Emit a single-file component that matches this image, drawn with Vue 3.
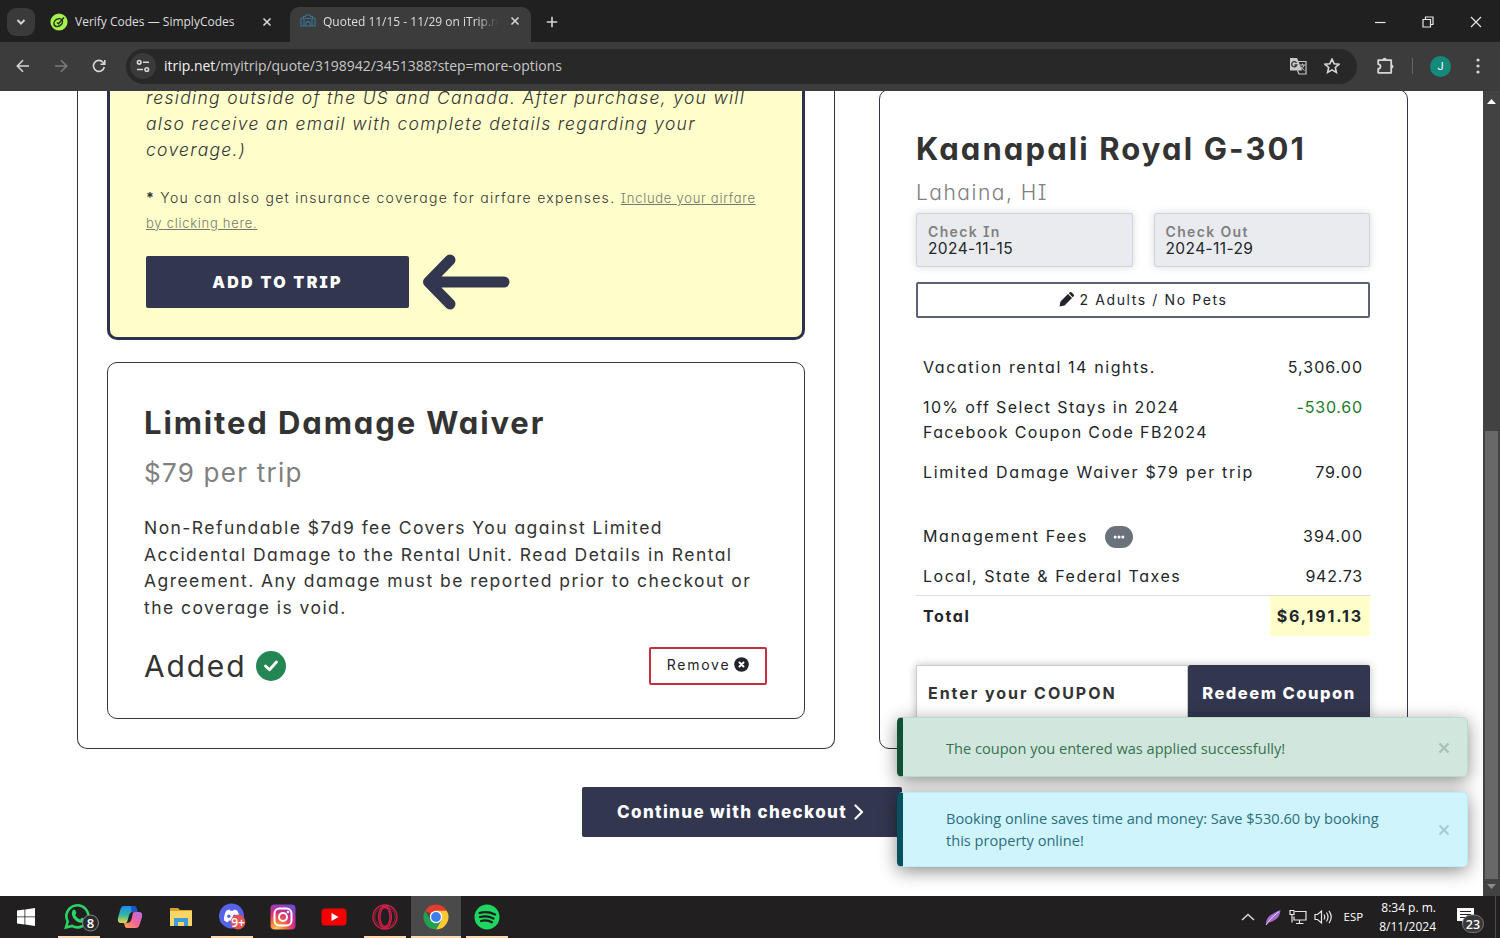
<template>
    <div class="desktop">
        <!-- Tab strip -->
        <div class="tab-strip">
            <div class="tab-search">
                <svg width="10" height="10" viewBox="0 0 10 10"><path d="M1.5 3l3.5 3.6L8.500 3" class="line bold" /></svg>
            </div>
            <div class="tab first">
                <svg class="favicon" width="18" height="18" viewBox="0 0 18 18">
                    <circle cx="9" cy="9" r="8.600" fill="#a6f04f" />
                    <ellipse cx="8.200" cy="9.600" rx="4.600" ry="3.500" transform="rotate(-35 8.200 9.600)" fill="none" stroke="#1d3312" stroke-width="1.500" />
                    <path d="M7 9.500l1.500 1.200 5.500-6.200" fill="none" stroke="#1d3312" stroke-width="1.500" />
                </svg>
                <span class="tab-title t1">Verify Codes — SimplyCodes</span>
                <svg class="tab-close" width="10" height="10" viewBox="0 0 10 10"><path d="M1.500 1.500l7 7M8.500 1.500l-7 7" class="line" /></svg>
            </div>
            <div class="tab active">
                <svg class="favicon" width="16" height="14" viewBox="0 0 16 14">
                    <path d="M1 12V4.500L3.500 4V2.500h2L6 1h4l.5 1.500h2V4l2.500.5V12zM4 12V4M12 12V4M6 12V8.500Q8 6.500 10 8.500V12M5 4.500h6" fill="none" stroke="#3a7292" stroke-width="1.200" />
                </svg>
                <span class="tab-title t2">Quoted 11/15 - 11/29 on iTrip.n</span>
                <svg class="tab-close" width="10" height="10" viewBox="0 0 10 10"><path d="M1.500 1.500l7 7M8.500 1.500l-7 7" class="line" /></svg>
            </div>
            <svg class="new-tab" width="12" height="12" viewBox="0 0 12 12"><path d="M6 .8v10.400M.8 6h10.400" class="line" /></svg>
            <div class="window-buttons">
                <svg width="12" height="12" viewBox="0 0 12 12"><path d="M1 6.500h10.500" class="line thin" /></svg>
                <svg width="12" height="12" viewBox="0 0 12 12"><path d="M1 3.500h7.500V11H1zM3.500 3.500V1H11v7.500H8.500" class="line thin" /></svg>
                <svg width="12" height="12" viewBox="0 0 12 12"><path d="M1 1l10 10M11 1L1 11" class="line thin" /></svg>
            </div>
        </div>

        <!-- Toolbar -->
        <div class="toolbar">
            <svg class="nav-icon" width="14" height="14" viewBox="0 0 14 14"><path d="M13 7H1.500M7 1.200L1.300 7 7 12.800" class="line" /></svg>
            <svg class="nav-icon dim" width="14" height="14" viewBox="0 0 14 14"><path d="M1 7h11.500M7 1.200L12.700 7 7 12.800" class="line" /></svg>
            <svg class="nav-icon" width="14" height="14" viewBox="0 0 14 14"><path d="M12.300 8A5.500 5.500 0 1 1 11 3.200L12.500 5M12.800 1v4.300H8.500" class="line" /></svg>
            <div class="omnibox">
                <div class="site-info">
                    <svg width="14" height="14" viewBox="0 0 14 14"><circle cx="3.200" cy="3.300" r="1.800" class="line" /><circle cx="10.800" cy="10.500" r="1.800" class="line" /><path d="M7 3.300h6M1 10.500h6" class="line" /></svg>
                </div>
                <span class="url"><b>itrip.net</b>/myitrip/quote/3198942/3451388?step=more-options</span>
                <svg class="translate" width="18" height="18" viewBox="0 0 18 18">
                    <path d="M1 1h7l1.500 3.500L13 13.500H1z" fill="#c8c8c8" />
                    <path d="M9 4.500h8V17h-7l-1.500-3.500" fill="none" stroke="#c8c8c8" stroke-width="1.200" />
                    <path d="M7.500 5.800A2.600 2.600 0 1 0 7.800 8H5.500" fill="none" stroke="#333" stroke-width="1.300" />
                    <path d="M11 8h5M13.500 6.500V8M15 8q-1 3-3 4.500M12 9.500q1 2.500 3.500 4" fill="none" stroke="#c8c8c8" stroke-width="1" />
                </svg>
                <svg width="16" height="16" viewBox="0 0 16 16"><path d="M8 1.200l2.100 4.500 4.900.5-3.700 3.300 1.100 4.900L8 11.900l-4.400 2.500 1.100-4.900L1 6.200l4.900-.5z" class="line" /></svg>
            </div>
            <svg class="puzzle" width="18" height="18" viewBox="0 0 18 18"><path d="M2.200 3.200h13v12.600h-13V12q2.300-.4 2.300-2.400T2.200 7.200z" class="line wide" stroke-linejoin="round" /><path d="M6.500 3Q6.500.8 8.600.8T10.700 3zM15.300 7.500q2.200 0 2.200 2t-2.200 2z" fill="#d6d6d6" /></svg>
            <span class="divider"></span>
            <span class="avatar">J</span>
            <svg class="menu" width="4" height="16" viewBox="0 0 4 16"><circle cx="2" cy="2" r="1.600" /><circle cx="2" cy="8" r="1.600" /><circle cx="2" cy="14" r="1.600" /></svg>
        </div>

        <!-- Page -->
        <div class="page">
            <div class="content">
                <main class="main-column">
                    <div class="options-panel">
                        <section class="insurance-card">
                            <p class="terms">
                                <span>residing outside of the US and Canada. After purchase, you will</span>
                                <span>also receive an email with complete details regarding your</span>
                                <span>coverage.)</span>
                            </p>
                            <p class="note"><b>*</b> You can also get insurance coverage for airfare expenses. <a>Include your airfare<br>by clicking here.</a></p>
                            <div class="add-row">
                                <button class="btn add-btn">ADD TO TRIP</button>
                                <svg width="88" height="56" viewBox="0 0 88 56"><path d="M82 28H7M28 6L6.500 28 28 50" fill="none" stroke="#32364f" stroke-width="11" stroke-linecap="round" stroke-linejoin="round" /></svg>
                            </div>
                        </section>
                        <section class="waiver-card">
                            <h2 class="waiver-title">Limited Damage Waiver</h2>
                            <p class="waiver-price">$79 per trip</p>
                            <p class="waiver-text">
                                <span v-for="line in waiverLines" :key="line">{{ line }}</span>
                            </p>
                            <div class="added-row">
                                <span class="added">Added</span>
                                <svg width="30" height="30" viewBox="0 0 30 30"><circle cx="15" cy="15" r="15" fill="#258655" /><path d="M9.500 15l4 3.800 7-7.800" fill="none" stroke="#fff" stroke-width="2.800" stroke-linecap="round" stroke-linejoin="round" /></svg>
                                <button class="remove-btn">
                                    <span>Remove</span>
                                    <svg width="15" height="15" viewBox="0 0 15 15"><circle cx="7.500" cy="7.500" r="7.300" fill="#212529" /><path d="M5.500 5.500l4 4M9.500 5.500l-4 4" stroke="#fff" stroke-width="2" stroke-linecap="round" /></svg>
                                </button>
                            </div>
                        </section>
                    </div>
                    <button class="btn checkout-btn">
                        <span>Continue with checkout</span>
                        <svg width="10" height="16" viewBox="0 0 10 16"><path d="M1.500 1.500L8 8l-6.500 6.500" fill="none" stroke="#fff" stroke-width="2.200" stroke-linecap="round" stroke-linejoin="round" /></svg>
                    </button>
                </main>

                <aside class="summary-panel">
                    <h2 class="property">Kaanapali Royal G-301</h2>
                    <p class="place">Lahaina, HI</p>
                    <div class="dates">
                        <div class="date-box"><label>Check In</label><span>2024-11-15</span></div>
                        <div class="date-box"><label>Check Out</label><span>2024-11-29</span></div>
                    </div>
                    <div class="guests">
                        <svg width="15" height="15" viewBox="0 0 15 15"><path d="M1.500 9.500L9 2l4 4-7.500 7.500L.5 14.500zM9.800 1.300l1-1q.8-.6 1.600 0l2.300 2.300q.6.800 0 1.600l-1 1z" fill="#212529" /></svg>
                        <span>2 Adults / No Pets</span>
                    </div>
                    <div class="charges">
                        <div v-for="c in charges" :key="c.id" class="charge" :class="c.id">
                            <div class="charge-label">
                                <span v-for="l in c.lines" :key="l">{{ l }}</span>
                                <svg v-if="c.more" width="28" height="22" viewBox="0 0 28 22"><rect width="28" height="22" rx="11" fill="#6a737b" /><circle cx="10.200" cy="11" r="1.500" fill="#fff" /><circle cx="14" cy="11" r="1.500" fill="#fff" /><circle cx="17.800" cy="11" r="1.500" fill="#fff" /></svg>
                            </div>
                            <div class="amount">{{ c.amount }}</div>
                        </div>
                    </div>
                    <div class="coupon">
                        <div class="coupon-input">Enter your COUPON</div>
                        <button class="btn redeem-btn">Redeem Coupon</button>
                    </div>
                </aside>
            </div>

            <div class="toasts">
                <div class="toast success">
                    <p><span>The coupon you entered was applied successfully!</span></p>
                    <svg width="12" height="12" viewBox="0 0 12 12"><path d="M1.500 1.500l9 9M10.500 1.500l-9 9" /></svg>
                </div>
                <div class="toast info">
                    <p><span>Booking online saves time and money: Save $530.60 by booking</span><span>this property online!</span></p>
                    <svg width="12" height="12" viewBox="0 0 12 12"><path d="M1.500 1.500l9 9M10.500 1.500l-9 9" /></svg>
                </div>
            </div>

            <div class="scrollbar">
                <svg width="9" height="6" viewBox="0 0 9 6"><path d="M0 6l4.500-5L9 6z" fill="#fff" /></svg>
                <div class="thumb"></div>
                <svg width="9" height="6" viewBox="0 0 9 6"><path d="M0 0l4.500 5L9 0z" fill="#8a8a8a" /></svg>
            </div>
        </div>

        <!-- Windows taskbar -->
        <div class="taskbar">
            <div class="task">
                <svg width="18" height="18" viewBox="0 0 18 18" fill="#fff"><path d="M0 2.500l7.500-1v7H0zM8.300 1.400L18 0v8.500H8.300zM0 9.300h7.500v7.200L0 15.500zM8.300 9.300H18V18l-9.700-1.400z" /></svg>
            </div>
            <div class="task open whatsapp">
                <svg width="36" height="30" viewBox="0 0 36 30">
                    <path d="M3 25.500l1.700-6A11 11 0 1 1 9 23.900z" fill="none" stroke="#2bd366" stroke-width="2.600" />
                    <path d="M9.500 8.500q1.500-2 2.800-.2l1 2.700q0 .8-1.200 2 1.800 3.200 5 4.500l1.600-1.800q.6-.3 3.300 1.300 0 3.500-3.500 3.800-4.500 0-8-4.500-2.800-4-1-7.800z" fill="#2bd366" />
                    <circle cx="27.500" cy="21" r="8" fill="#2b2a2c" stroke="#84888a" />
                    <text x="27.500" y="25.500" text-anchor="middle" class="count">8</text>
                </svg>
            </div>
            <div class="task">
                <svg width="26" height="24" viewBox="0 0 26 24">
                    <defs>
                        <linearGradient id="cop-a" x1="0" y1="0" x2="0" y2="1"><stop offset="0" stop-color="#1b8af0" /><stop offset=".55" stop-color="#35b9a0" /><stop offset="1" stop-color="#f4d443" /></linearGradient>
                        <linearGradient id="cop-b" x1="1" y1="0" x2="0" y2="1"><stop offset="0" stop-color="#b56cf0" /><stop offset=".5" stop-color="#f0649a" /><stop offset="1" stop-color="#ffa54a" /></linearGradient>
                    </defs>
                    <path d="M7 1h10q2 0 3 4l.5 2h-5q-2 0-3 4l-1.500 5q-1 2-3 2H4q-4 0-3-5L3.500 4Q4.500 1 7 1z" fill="url(#cop-a)" />
                    <path d="M14 1h3q2 0 3 4l.5 2h-6z" fill="#2450c8" />
                    <path d="M19 7h3q4 0 3 5l-2.500 8q-1 3-3.500 3h-9q-2 0-2.500-3l-.5-2h3q2 0 3-4l1.500-5q.7-2 4-2z" fill="url(#cop-b)" />
                    <path d="M16 7.500h-2q-1.500.5-2.300 4L10 17.500h2.300q1.500-.5 2.400-4z" fill="#211f20" />
                </svg>
            </div>
            <div class="task">
                <svg width="24" height="20" viewBox="0 0 24 20"><path d="M1 1h8l2 2h12v5H1z" fill="#d9a22c" /><path d="M1 4h22v15H1z" fill="#fbd667" /><path d="M5 19v-8h14v8h-4v-4H9v4z" fill="#3d9bd8" /></svg>
            </div>
            <div class="task open">
                <svg width="28" height="28" viewBox="0 0 28 28">
                    <circle cx="13.500" cy="13" r="12.500" fill="#5663e8" />
                    <path d="M8.500 7.500l3-1 .8 1.200h3l.8-1.200 3 1q3 4.500 2.600 10l-3.500 2-1.300-2h-6l-1.300 2-3.500-2q-.5-5.500 2.400-10z" fill="#fff" />
                    <circle cx="10.800" cy="13.300" r="1.700" fill="#5663e8" /><circle cx="16.600" cy="13.300" r="1.700" fill="#5663e8" />
                    <circle cx="20" cy="19" r="7.400" fill="#e25354" />
                    <text x="20" y="23.500" text-anchor="middle" class="badge">9+</text>
                </svg>
            </div>
            <div class="task">
                <svg width="26" height="26" viewBox="0 0 26 26">
                    <defs>
                        <radialGradient id="ig" cx=".25" cy="1" r="1.150"><stop offset="0" stop-color="#fdd35a" /><stop offset=".3" stop-color="#f9713c" /><stop offset=".6" stop-color="#d62c86" /><stop offset="1" stop-color="#6a4bd6" /></radialGradient>
                    </defs>
                    <rect x=".5" y=".5" width="25" height="25" rx="4" fill="url(#ig)" />
                    <rect x="4.500" y="4.500" width="17" height="17" rx="5" fill="none" stroke="#fff" stroke-width="2" />
                    <circle cx="13" cy="13" r="4" fill="none" stroke="#fff" stroke-width="2" /><circle cx="18" cy="8" r="1.200" fill="#fff" />
                </svg>
            </div>
            <div class="task">
                <svg width="26" height="18" viewBox="0 0 26 18"><rect x=".5" y=".5" width="25" height="17" rx="3.500" fill="#f40000" /><path d="M10.500 5l7 4-7 4z" fill="#fff" /></svg>
            </div>
            <div class="task open">
                <svg width="26" height="26" viewBox="0 0 26 26" fill="none" stroke="#cf1f4a" stroke-width="1.300"><circle cx="13" cy="13" r="12" /><circle cx="13" cy="13" r="10.300" stroke-width=".7" /><ellipse cx="13" cy="13" rx="6.500" ry="11" /><ellipse cx="13" cy="13" rx="5" ry="9.500" /></svg>
            </div>
            <div class="task current">
                <svg width="26" height="26" viewBox="0 0 26 26">
                    <path d="M13 13L2.200 6.800A12.400 12.400 0 0 1 23.800 6.800z" fill="#e33b2e" />
                    <path d="M13 13V6.800h10.800A12.400 12.400 0 0 1 13 25.400L18.400 16z" fill="#fcc934" />
                    <path d="M2.200 6.800L7.600 16 13 18.500l5-2L13 25.400A12.400 12.400 0 0 1 2.200 6.800z" fill="#23a050" />
                    <circle cx="13" cy="13" r="6.200" fill="#fff" /><circle cx="13" cy="13" r="4.900" fill="#3c7df0" />
                </svg>
            </div>
            <div class="task open">
                <svg width="26" height="26" viewBox="0 0 26 26"><circle cx="13" cy="13" r="12.500" fill="#1ed760" /><path d="M5.500 9q8-2.300 15.500 1.500M6 13q7-2 13.500 1.500M7 17q6-1.500 11 1.300" fill="none" stroke="#1d1d1d" stroke-width="2.200" stroke-linecap="round" /></svg>
            </div>

            <div class="tray">
                <svg width="14" height="8" viewBox="0 0 14 8"><path d="M1 7l6-5.500L13 7" class="line" /></svg>
                <svg class="feather" width="16" height="17" viewBox="0 0 16 17"><path d="M1 16Q.5 10 5 6.500T15.500 1Q15 7.500 10.500 10.500T3 13.500z" fill="#a66dd0" /><path d="M1 16Q5 9 14 2.500" stroke="#e6cdf5" stroke-width="1" fill="none" /></svg>
                <svg class="network" width="18" height="16" viewBox="0 0 18 16"><path d="M6 2.500h11v8.500H5V7.500M10.500 11v3.500M7 14.500h7.500M1 1.500h4v4H1zM3 5.500v8" class="line thin" /></svg>
                <svg class="volume" width="19" height="16" viewBox="0 0 19 16"><path d="M1 5.500h2.500L7.500 2v12l-4-3.500H1zM10 5.500q1.500 2.500 0 5M12.500 3.500q3 4.500 0 9M15 1.800q4.500 6.200 0 12.400" class="line thin" /></svg>
                <span class="lang">ESP</span>
                <div class="clock"><span>8:34 p. m.</span><span>8/11/2024</span></div>
                <svg class="action-center" width="30" height="28" viewBox="0 0 30 28">
                    <path d="M2 2h17v13H11l-4 4v-4H2z" fill="#fff" /><path d="M5 5.500h11M5 8.500h11M5 11.500h7" stroke="#222" stroke-width="1.200" />
                    <rect x="7.500" y="9" width="21" height="17.500" rx="8.700" fill="#38373a" stroke="#777" />
                    <text x="18" y="22.500" text-anchor="middle" class="notif">23</text>
                </svg>
                <span class="show-desktop"></span>
            </div>
        </div>
    </div>
</template>

<script setup>
const waiverLines = [
    'Non-Refundable $7d9 fee Covers You against Limited',
    'Accidental Damage to the Rental Unit. Read Details in Rental',
    'Agreement. Any damage must be reported prior to checkout or',
    'the coverage is void.'
]

const charges = [
    { id: 'rental', lines: ['Vacation rental 14 nights.'], amount: '5,306.00' },
    { id: 'discount', lines: ['10% off Select Stays in 2024', 'Facebook Coupon Code FB2024'], amount: '-530.60' },
    { id: 'waiver', lines: ['Limited Damage Waiver $79 per trip'], amount: '79.00' },
    { id: 'fees', lines: ['Management Fees'], amount: '394.00', more: true },
    { id: 'taxes', lines: ['Local, State & Federal Taxes'], amount: '942.73' },
    { id: 'total', lines: ['Total'], amount: '$6,191.13' }
]
</script>

<style>
body {
    background: #fff;
    overflow: hidden;
}
</style>

<style scoped>
.desktop {
    width: 1500px;
    height: 938px;
    display: flex;
    flex-direction: column;
    overflow: hidden;
    font-family: "Open Sans", sans-serif;
    white-space: nowrap;
}

.desktop * {
    box-sizing: border-box;
}

p, h2 {
    margin: 0;
}

svg {
    display: block;
    flex: none;
}

button {
    font-family: inherit;
    border: 0;
    padding: 0;
}

.line {
    fill: none;
    stroke: #d6d6d6;
    stroke-width: 1.6;
}

.line.bold {
    stroke-width: 2;
}

.line.wide {
    stroke-width: 1.8;
}

.line.thin {
    stroke: #e8e8e8;
    stroke-width: 1.2;
}

/* Tab strip */
.tab-strip {
    height: 42px;
    flex: none;
    background: #202020;
    display: flex;
    align-items: center;
    padding: 1px 18px 0 7px;
    color: #dedede;
}

.tab-search {
    width: 28px;
    height: 28px;
    border-radius: 9px;
    background: #3a3a3a;
    display: flex;
    align-items: center;
    justify-content: center;
}

.tab {
    display: flex;
    align-items: center;
    height: 36px;
}

.tab.first {
    width: 255px;
    padding-left: 15px;
}

.tab-title {
    font-size: 12px;
    margin-left: 7px;
    overflow: hidden;
}

.t1 {
    width: 178px;
}

.t2 {
    width: 175px;
    margin-left: 7px;
    mask-image: linear-gradient(90deg, #000 88%, transparent);
}

.tab-close {
    margin-left: 8px;
}

.tab.first .tab-close {
    margin-left: auto;
    margin-right: 18px;
}

.tab.active {
    width: 241px;
    height: 35px;
    align-self: flex-end;
    border-radius: 9px 9px 0 0;
    background: #3c3c3c;
    padding-left: 10px;
    padding-bottom: 7px;
}

.tab.active .tab-close {
    margin-left: 12px;
}

.new-tab {
    margin-left: 15px;
}

.window-buttons {
    margin-left: auto;
    display: flex;
    gap: 36px;
}

/* Toolbar */
.toolbar {
    height: 49px;
    flex: none;
    background: #3c3c3c;
    display: flex;
    align-items: center;
    padding: 0 20px 1px 16px;
}

.nav-icon {
    margin-right: 24px;
}

.nav-icon.dim {
    opacity: 0.4;
}

.omnibox {
    width: 1231px;
    height: 35px;
    margin-left: -4px;
    border-radius: 18px;
    background: #282828;
    display: flex;
    align-items: center;
    padding: 0 17px 0 4px;
}

.site-info {
    width: 26px;
    height: 26px;
    border-radius: 50%;
    background: #3a3a3a;
    display: flex;
    align-items: center;
    justify-content: center;
}

.url {
    margin-left: 8px;
    padding-bottom: 1px;
    font-size: 13.95px;
    color: #c7c7c7;
    flex: 1;
}

.url b {
    font-weight: 400;
    color: #f2f2f2;
}

.translate {
    margin-right: 17px;
}

.puzzle {
    margin-left: 19px;
}

.divider {
    width: 1px;
    height: 16px;
    background: #666;
    margin: 0 17px 0 18px;
}

.avatar {
    width: 21px;
    height: 21px;
    border-radius: 50%;
    background: #15897a;
    color: #fff;
    font-size: 11px;
    font-family: Roboto, sans-serif;
    line-height: 21px;
    text-align: center;
}

.menu {
    margin-left: auto;
    fill: #d6d6d6;
}

/* Page */
.page {
    position: relative;
    height: 805px;
    flex: none;
    overflow: hidden;
    background: #fff;
    font-family: Inter, sans-serif;
    font-feature-settings: "cv11", "cv08", "calt" 0;
    color: #212529;
}

.content {
    display: flex;
    align-items: flex-start;
    padding-left: 77px;
    gap: 44px;
}

.main-column {
    width: 758px;
    display: flex;
    flex-direction: column;
}

.options-panel {
    height: 658px;
    border: 1px solid #32364f;
    border-top: 0;
    border-radius: 0 0 10px 10px;
    padding: 0 29px;
}

.insurance-card {
    display: flow-root;
    height: 249px;
    border: 3px solid #2d3150;
    border-top: 0;
    border-radius: 0 0 10px 10px;
    background: #ffffcc;
    padding-left: 36px;
    color: #333;
}

.terms {
    margin-top: -6px;
    font-size: 17.5px;
    font-weight: 300;
    font-style: italic;
    line-height: 26px;
    letter-spacing: 1.3px;
}

.terms span {
    display: block;
}

.note {
    margin-top: 22px;
    font-size: 14px;
    font-weight: 300;
    line-height: 25px;
    letter-spacing: 1.29px;
}

.note b {
    font-weight: 700;
}

.note a {
    font-size: 13px;
    line-height: 1;
    color: #77796b;
    text-decoration: underline;
    letter-spacing: 0.73px;
}

.add-row {
    display: flex;
    align-items: center;
    gap: 13px;
    height: 56px;
    margin-top: 19px;
}

.btn {
    background: #32364f;
    color: #fff;
    font-weight: 800;
    font-feature-settings: inherit;
    border-radius: 2px;
}

.add-btn {
    width: 263px;
    height: 52px;
    font-size: 16px;
    letter-spacing: 2.3px;
    font-weight: 900;
}

.waiver-card {
    height: 357px;
    margin-top: 22px;
    border: 1px solid #32364f;
    border-radius: 10px;
    padding: 35px 37px 35px 36px;
    color: #333;
}

.waiver-title {
    font-size: 31px;
    line-height: 50px;
    font-weight: 700;
    letter-spacing: 1.87px;
}

.waiver-price {
    font-size: 26px;
    line-height: 50px;
    color: #808080;
    letter-spacing: 1.25px;
}

.waiver-text {
    margin-top: 17px;
    font-size: 17.5px;
    line-height: 26.6px;
    letter-spacing: 1.45px;
}

.waiver-text span {
    display: block;
}

.added-row {
    display: flex;
    align-items: center;
    margin-top: 26px;
    height: 38px;
}

.added {
    font-size: 30px;
    letter-spacing: 1.8px;
    width: 112px;
}

.remove-btn {
    width: 118px;
    height: 38px;
    margin-left: auto;
    border: 2px solid #c13240;
    border-radius: 2px;
    background: #fff;
    display: flex;
    align-items: center;
    justify-content: center;
    gap: 4px;
    font-size: 14px;
    letter-spacing: 1.75px;
    color: #212529;
    padding-bottom: 3px;
    font-feature-settings: inherit;
}

.checkout-btn {
    width: 320px;
    height: 50px;
    margin: 38px 0 0 505px;
    font-size: 17px;
    letter-spacing: 1.36px;
    display: flex;
    align-items: center;
    gap: 7px;
    padding-left: 35px;
}

/* Booking summary */
.summary-panel {
    width: 529px;
    height: 660px;
    margin-top: -2px;
    border: 1px solid #32364f;
    border-radius: 10px;
    padding: 34px 37px 0 36px;
}

.property {
    font-size: 31px;
    line-height: 50px;
    font-weight: 700;
    letter-spacing: 2.1px;
    color: #333;
}

.place {
    font-size: 21px;
    line-height: 37px;
    font-weight: 300;
    letter-spacing: 1.5px;
    color: #808080;
}

.dates {
    display: flex;
    gap: 21px;
    margin-top: 2px;
}

.date-box {
    flex: 1;
    height: 54px;
    border: 1px solid #cdd3df;
    border-radius: 2px;
    background: #e9ebef;
    box-shadow: 0 0 8px rgba(0, 0, 0, 0.15);
    padding: 10px 11px;
    display: flex;
    flex-direction: column;
}

.date-box label {
    font-size: 14px;
    line-height: 16px;
    font-weight: 600;
    letter-spacing: 1.35px;
    color: #808080;
}

.date-box span {
    font-size: 15.5px;
    line-height: 17px;
    letter-spacing: 0.4px;
}

.guests {
    height: 36px;
    margin-top: 15px;
    border: 2px solid #5b6275;
    border-radius: 2px;
    display: flex;
    align-items: center;
    justify-content: center;
    gap: 6px;
    padding-bottom: 2px;
    font-size: 14px;
    letter-spacing: 1.6px;
}

.charges {
    margin-top: 29.5px;
    font-size: 16px;
    line-height: 25px;
    letter-spacing: 1.6px;
}

.charge {
    display: flex;
    justify-content: space-between;
}

.charge-label {
    padding: 7.5px 7px;
    display: flex;
    flex-direction: column;
}

.discount .charge-label {
    letter-spacing: 1.37px;
}

.waiver .charge-label {
    letter-spacing: 1.68px;
}

.amount {
    padding: 7.5px 7px;
    letter-spacing: 1px;
}

.discount .amount {
    color: #1c7a2c;
    letter-spacing: 0.8px;
}

.fees {
    margin-top: 24px;
}

.fees .charge-label {
    flex-direction: row;
    align-items: center;
    gap: 16.5px;
}

.taxes {
    height: 38.5px;
}

.taxes .charge-label {
    letter-spacing: 1.52px;
}

.taxes .amount {
    letter-spacing: 0.75px;
}

.total {
    border-top: 1px solid #dcdee0;
    font-weight: 700;
}

.total .amount {
    background: #ffffcc;
    letter-spacing: 1.85px;
}

.coupon {
    display: flex;
    margin-top: 29px;
    box-shadow: 0 0 8px rgba(0, 0, 0, 0.25);
}

.coupon-input {
    width: 272px;
    height: 55px;
    border: 1px solid #ccc;
    background: #fff;
    padding-left: 11px;
    font-size: 16px;
    font-weight: 700;
    line-height: 54px;
    letter-spacing: 1.95px;
    color: #333;
}

.redeem-btn {
    flex: 1;
    font-size: 16.5px;
    letter-spacing: 1.5px;
}

/* Notifications over the page */
.toasts {
    position: absolute;
    left: 897px;
    top: 626px;
    width: 571px;
    display: flex;
    flex-direction: column;
    gap: 15px;
    font-family: "Open Sans", sans-serif;
    font-size: 14.6px;
    line-height: 22px;
}

.toast {
    border: 1px solid;
    border-left-width: 6px;
    border-radius: 5px;
    box-shadow: 0 4px 18px rgba(0, 0, 0, 0.45);
    display: flex;
    align-items: center;
    justify-content: space-between;
    padding: 0 17px 0 43px;
}

.toast span {
    display: block;
}

.toast svg {
    fill: none;
    stroke-width: 2.4;
}

.success {
    height: 60px;
    background: #d1e7dd;
    border-color: #badbcc;
    border-left-color: #0f5132;
    color: #37714f;
    padding-top: 1px;
}

.success svg {
    stroke: #a6c4b6;
}

.info {
    height: 75px;
    background: #cff4fc;
    border-color: #b6effb;
    border-left-color: #055160;
    color: #2c6f7c;
}

.info p {
    padding-bottom: 1px;
}

.info svg {
    stroke: #a5ced8;
}

.scrollbar {
    position: absolute;
    right: 0;
    top: 0;
    width: 17px;
    height: 805px;
    background: #424242;
    display: flex;
    flex-direction: column;
    align-items: center;
    padding: 7px 0 6px;
}

.thumb {
    width: 13px;
    height: 448px;
    margin: 327px 0 auto;
    background: #686868;
}

/* Taskbar */
.taskbar {
    height: 42px;
    flex: none;
    background: #211f20;
    display: flex;
    color: #fff;
}

.task {
    width: 51px;
    height: 42px;
    display: flex;
    align-items: center;
    justify-content: center;
}

.task.open {
    background: linear-gradient(#fbd8b0, #fbd8b0) center bottom / 42px 2px no-repeat;
}

.task.whatsapp {
    width: 53px;
    padding-left: 6px;
    background-position: 7px bottom;
}

.task.current {
    background: linear-gradient(#fbd8b0, #fbd8b0) center bottom / 50px 2px no-repeat, linear-gradient(#4a4a4a, #4a4a4a) center / 50px 42px no-repeat;
}

.count {
    font: 600 13px "Open Sans", sans-serif;
    fill: #fff;
}

.badge {
    font: 600 12px "Open Sans", sans-serif;
    fill: #fff;
}

.notif {
    font: 600 12.5px "Open Sans", sans-serif;
    fill: #fff;
}

.tray {
    margin-left: auto;
    display: flex;
    align-items: center;
    font-size: 12px;
}

.feather {
    margin-left: 10px;
}

.network {
    margin-left: 8px;
}

.volume {
    margin-left: 7px;
}

.lang {
    margin: 0 0 2px 11px;
    font-size: 11.5px;
}

.clock {
    display: flex;
    flex-direction: column;
    align-items: flex-end;
    line-height: 19px;
    margin-left: 16px;
    padding-bottom: 1px;
}

.action-center {
    margin: 6px 10px 0 19px;
}

.show-desktop {
    width: 5px;
    height: 42px;
    border-left: 1px solid #4d4b4c;
}
</style>
